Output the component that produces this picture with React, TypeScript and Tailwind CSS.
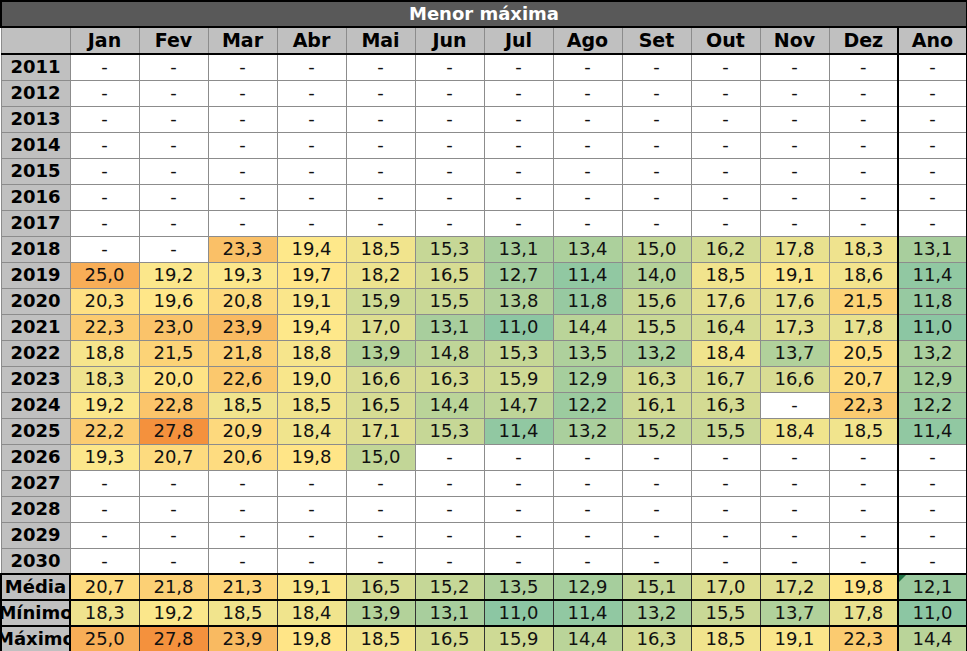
const months = ['Jan', 'Fev', 'Mar', 'Abr', 'Mai', 'Jun', 'Jul', 'Ago', 'Set', 'Out', 'Nov', 'Dez', 'Ano']

// null = sem dados ("-")
const data: Record<number, (number | null)[]> = {
  2018: [null, null, 23.3, 19.4, 18.5, 15.3, 13.1, 13.4, 15.0, 16.2, 17.8, 18.3, 13.1],
  2019: [25.0, 19.2, 19.3, 19.7, 18.2, 16.5, 12.7, 11.4, 14.0, 18.5, 19.1, 18.6, 11.4],
  2020: [20.3, 19.6, 20.8, 19.1, 15.9, 15.5, 13.8, 11.8, 15.6, 17.6, 17.6, 21.5, 11.8],
  2021: [22.3, 23.0, 23.9, 19.4, 17.0, 13.1, 11.0, 14.4, 15.5, 16.4, 17.3, 17.8, 11.0],
  2022: [18.8, 21.5, 21.8, 18.8, 13.9, 14.8, 15.3, 13.5, 13.2, 18.4, 13.7, 20.5, 13.2],
  2023: [18.3, 20.0, 22.6, 19.0, 16.6, 16.3, 15.9, 12.9, 16.3, 16.7, 16.6, 20.7, 12.9],
  2024: [19.2, 22.8, 18.5, 18.5, 16.5, 14.4, 14.7, 12.2, 16.1, 16.3, null, 22.3, 12.2],
  2025: [22.2, 27.8, 20.9, 18.4, 17.1, 15.3, 11.4, 13.2, 15.2, 15.5, 18.4, 18.5, 11.4],
  2026: [19.3, 20.7, 20.6, 19.8, 15.0, null, null, null, null, null, null, null, null],
}

const summary: { label: string; values: number[] }[] = [
  { label: 'Média', values: [20.7, 21.8, 21.3, 19.1, 16.5, 15.2, 13.5, 12.9, 15.1, 17.0, 17.2, 19.8, 12.1] },
  { label: 'Mínimo', values: [18.3, 19.2, 18.5, 18.4, 13.9, 13.1, 11.0, 11.4, 13.2, 15.5, 13.7, 17.8, 11.0] },
  { label: 'Máximo', values: [25.0, 27.8, 23.9, 19.8, 18.5, 16.5, 15.9, 14.4, 16.3, 18.5, 19.1, 22.3, 14.4] },
]

const years = Array.from({ length: 20 }, (_, i) => 2011 + i)

const LOW = [140, 198, 163]
const MID = [255, 232, 138]
const HIGH = [244, 145, 61]

function mix(a: number[], b: number[], t: number) {
  return `rgb(${a.map((v, i) => Math.round(v + (b[i] - v) * t)).join(',')})`
}

function scale(v: number) {
  if (v <= 19.5) return mix(LOW, MID, Math.max(0, (v - 11) / 8.5))
  return mix(MID, HIGH, Math.min(1, (v - 19.5) / 8.3))
}

const fmt = (v: number) => v.toFixed(1).replace('.', ',')

const font = "font-['DejaVu_Sans',_'Liberation_Sans',_sans-serif]"

function ValueCell({ v, last }: { v: number | null; last: boolean }) {
  return (
    <td
      className={`h-[26px] p-0 text-center text-[18px] text-[#111] leading-none ${
        last ? 'border-x-2 border-x-black border-y border-y-[#8c8c8c]' : 'border border-[#8c8c8c]'
      }`}
      style={v === null ? { background: '#fff' } : { background: scale(v) }}
    >
      {v === null ? '-' : fmt(v)}
    </td>
  )
}

export default function App() {
  return (
    <div className={`w-[967px] h-[651px] overflow-hidden bg-white ${font}`}>
      <table className="w-[967px] table-fixed border-collapse">
        <colgroup>
          <col className="w-[69px]" />
          {months.map((m) => (
            <col key={m} className="w-[69px]" />
          ))}
        </colgroup>
        <thead>
          <tr>
            <th
              colSpan={14}
              className="h-[26px] p-0 bg-[#595959] border-2 border-black text-white text-[18px] font-bold leading-none"
            >
              Menor máxima
            </th>
          </tr>
          <tr>
            <th className="h-[27px] p-0 bg-[#c0c0c0] border border-[#8c8c8c] border-b-2 border-b-black" />
            {months.map((m, i) => (
              <th
                key={m}
                className={`h-[27px] p-0 bg-[#c0c0c0] text-[19px] font-bold text-black leading-none border-b-2 border-b-black ${
                  i === 12 ? 'border-x-2 border-x-black border-t-2 border-t-black' : 'border border-[#8c8c8c]'
                }`}
              >
                {m}
              </th>
            ))}
          </tr>
        </thead>
        <tbody>
          {years.map((y) => {
            const row = data[y] ?? Array(13).fill(null)
            return (
              <tr key={y}>
                <th className="h-[26px] p-0 bg-[#c0c0c0] text-[18px] font-bold text-black leading-none border border-[#8c8c8c]">
                  {y}
                </th>
                {row.map((v, i) => (
                  <ValueCell key={i} v={v} last={i === 12} />
                ))}
              </tr>
            )
          })}
          {summary.map((s, r) => (
            <tr key={s.label}>
              <th className="h-[26px] p-0 bg-[#c0c0c0] border-2 border-black">
                <div className="flex justify-center overflow-hidden w-[67px] text-[18px] font-bold text-black leading-none whitespace-nowrap">
                  {s.label}
                </div>
              </th>
              {s.values.map((v, i) => (
                <td
                  key={i}
                  className={`relative h-[26px] p-0 text-center text-[18px] text-[#111] leading-none border-2 border-black ${
                    i < 12 ? 'border-x border-x-[#333]' : ''
                  }`}
                  style={{ background: scale(v) }}
                >
                  {r === 0 && i === 12 && (
                    <span className="absolute left-0 top-0 w-0 h-0 border-t-[7px] border-t-[#217346] border-r-[7px] border-r-transparent" />
                  )}
                  {fmt(v)}
                </td>
              ))}
            </tr>
          ))}
        </tbody>
      </table>
    </div>
  )
}
